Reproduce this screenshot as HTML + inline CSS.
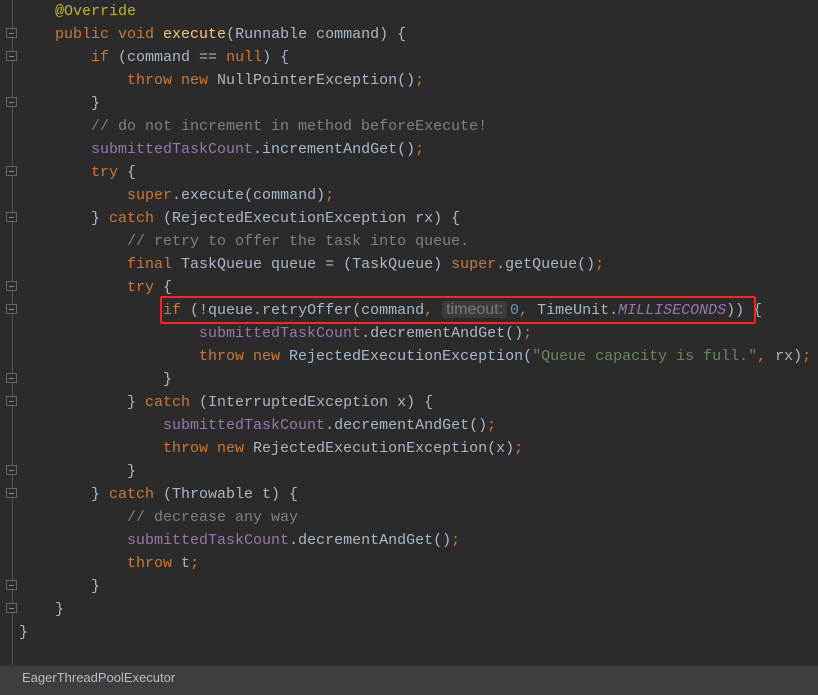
<!DOCTYPE html>
<html><head><meta charset="utf-8"><style>
body{margin:0;width:818px;height:695px;background:#2b2b2b;overflow:hidden;position:relative;font-family:"Liberation Mono",monospace;font-size:15px;color:#a9b7c6}
.l{position:absolute;left:19px;height:23px;line-height:23px;white-space:pre}
.k{color:#cc7832}.f{color:#9876aa}.c{color:#808080}.s{color:#6a8759}.a{color:#bbb529}.m{color:#ffc66d}.i{color:#9876aa;font-style:italic}
.h{background:#3b3b3b;color:#7a7a7a;font-family:"Liberation Sans",sans-serif;font-size:16px;border-radius:3px;padding:0 4px;margin-left:9px;margin-right:3px}
.g{position:absolute;left:12px;top:0;width:1px;height:665px;background:#555}
.fo{position:absolute;left:6px;width:11px;height:10px;border:1px solid #666;background:#2b2b2b;box-sizing:border-box}
.fo:after{content:"";position:absolute;left:2px;top:4px;width:5px;height:1px;background:#888}
.bar{position:absolute;left:0;top:665px;width:818px;height:23px;background:#3c3f41;border-top:1px solid #323232;font-family:"Liberation Sans",sans-serif;font-size:13px;color:#bbb;line-height:23px}
.bot{position:absolute;left:0;top:688px;width:818px;height:7px;background:#3c3f41}
.box{position:absolute;left:160px;top:296px;width:596px;height:28px;border:2px solid #ff2020;box-sizing:border-box;border-radius:2px}
</style></head><body>
<div class="g"></div>
<div class="l" style="top:0px">    <span class="a">@Override</span></div>
<div class="l" style="top:23px">    <span class="k">public void </span><span class="m">execute</span>(Runnable command) {</div>
<div class="l" style="top:46px">        <span class="k">if </span>(command == <span class="k">null</span>) {</div>
<div class="l" style="top:69px">            <span class="k">throw new </span>NullPointerException()<span class="k">;</span></div>
<div class="l" style="top:92px">        }</div>
<div class="l" style="top:115px">        <span class="c">// do not increment in method beforeExecute!</span></div>
<div class="l" style="top:138px">        <span class="f">submittedTaskCount</span>.incrementAndGet()<span class="k">;</span></div>
<div class="l" style="top:161px">        <span class="k">try </span>{</div>
<div class="l" style="top:184px">            <span class="k">super</span>.execute(command)<span class="k">;</span></div>
<div class="l" style="top:207px">        } <span class="k">catch </span>(RejectedExecutionException rx) {</div>
<div class="l" style="top:230px">            <span class="c">// retry to offer the task into queue.</span></div>
<div class="l" style="top:253px">            <span class="k">final </span>TaskQueue queue = (TaskQueue) <span class="k">super</span>.getQueue()<span class="k">;</span></div>
<div class="l" style="top:276px">            <span class="k">try </span>{</div>
<div class="l" style="top:298px">                <span class="k">if </span>(!queue.retryOffer(command<span class="k">,</span><span class="h">timeout:</span><span style="color:#6897bb">0</span><span class="k">, </span>TimeUnit.<span class="i">MILLISECONDS</span>)) {</div>
<div class="l" style="top:322px">                    <span class="f">submittedTaskCount</span>.decrementAndGet()<span class="k">;</span></div>
<div class="l" style="top:345px">                    <span class="k">throw new </span>RejectedExecutionException(<span class="s">"Queue capacity is full."</span><span class="k">, </span>rx)<span class="k">;</span></div>
<div class="l" style="top:368px">                }</div>
<div class="l" style="top:391px">            } <span class="k">catch </span>(InterruptedException x) {</div>
<div class="l" style="top:414px">                <span class="f">submittedTaskCount</span>.decrementAndGet()<span class="k">;</span></div>
<div class="l" style="top:437px">                <span class="k">throw new </span>RejectedExecutionException(x)<span class="k">;</span></div>
<div class="l" style="top:460px">            }</div>
<div class="l" style="top:483px">        } <span class="k">catch </span>(Throwable t) {</div>
<div class="l" style="top:506px">            <span class="c">// decrease any way</span></div>
<div class="l" style="top:529px">            <span class="f">submittedTaskCount</span>.decrementAndGet()<span class="k">;</span></div>
<div class="l" style="top:552px">            <span class="k">throw </span>t<span class="k">;</span></div>
<div class="l" style="top:575px">        }</div>
<div class="l" style="top:598px">    }</div>
<div class="l" style="top:621px">}</div>
<div class="box"></div>
<div class="fo" style="top:28px"></div><div class="fo" style="top:51px"></div><div class="fo" style="top:97px"></div>
<div class="fo" style="top:166px"></div><div class="fo" style="top:212px"></div><div class="fo" style="top:281px"></div>
<div class="fo" style="top:304px"></div><div class="fo" style="top:373px"></div><div class="fo" style="top:396px"></div>
<div class="fo" style="top:465px"></div><div class="fo" style="top:488px"></div><div class="fo" style="top:580px"></div>
<div class="fo" style="top:603px"></div>
<div class="bar"><span style="padding-left:22px">EagerThreadPoolExecutor</span></div>
<div class="bot"></div>
</body></html>
